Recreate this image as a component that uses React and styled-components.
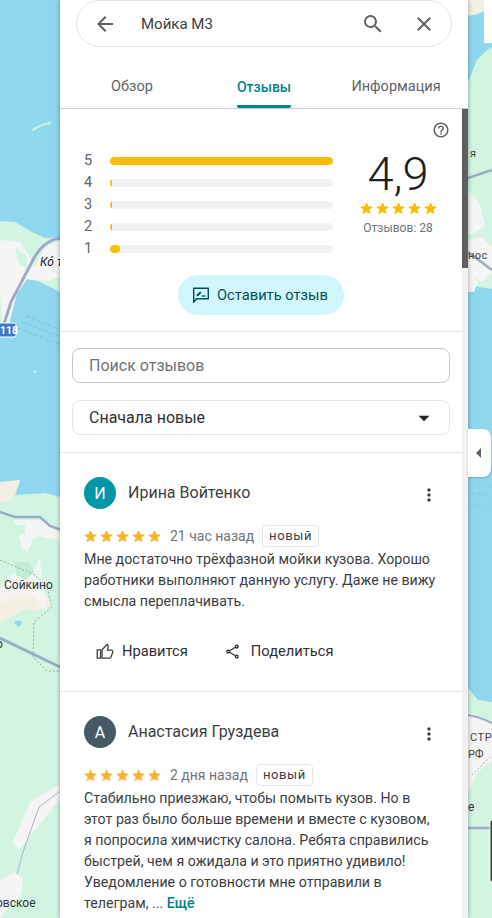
import React from 'react';
import styled, { createGlobalStyle } from 'styled-components';
import { MdArrowBack, MdSearch, MdClose, MdHelpOutline, MdMoreVert, MdOutlineShare, MdArrowDropDown } from 'react-icons/md';

const GlobalStyle = createGlobalStyle`
  html, body { margin: 0; padding: 0; background: #8ed7ec; }
  body { font-family: Roboto, "Noto Sans", sans-serif; -webkit-font-smoothing: antialiased; }
  * { box-sizing: border-box; }
`;

const Page = styled.div`
  position: relative;
  width: 492px;
  height: 918px;
  overflow: hidden;
  background: #8ed7ec;
`;

const MapLayer = styled.svg`
  position: absolute;
  inset: 0;
  width: 492px;
  height: 918px;
  font-family: Roboto, sans-serif;
`;

const Panel = styled.main`
  position: relative;
  width: 408px;
  height: 918px;
  margin-left: 60px;
  background: #fff;
  box-shadow: 0 0 5px rgba(0, 0, 0, 0.35);
  display: flex;
  flex-direction: column;
`;

const Header = styled.header`
  height: 109px;
  flex: none;
  border-bottom: 1px solid #cfcfcf;
  display: flex;
  flex-direction: column;
`;

const SearchBar = styled.div`
  height: 47px;
  margin: 0 16px;
  padding: 0 15px 0 16px;
  border: 1px solid #e2e2e2;
  border-radius: 24px;
  display: flex;
  align-items: center;
  color: #5f6368;
`;

const SearchText = styled.div`
  flex: 1;
  margin-left: 24px;
  font-size: 15px;
  color: #3c4043;
`;

const SearchIcon = styled.span`
  display: flex;
  margin-left: ${p => p.$gap || 0}px;
`;

const Tabs = styled.nav`
  flex: 1;
  display: grid;
  grid-template-columns: repeat(3, 132px);
  padding-left: 6px;
`;

const Tab = styled.div`
  justify-self: center;
  height: 61px;
  padding-top: 31px;
  font-size: ${p => (p.$active ? 14 : 14.5)}px;
  line-height: 18px;
  white-space: nowrap;
  font-weight: ${p => (p.$active ? 500 : 400)};
  color: ${p => (p.$active ? '#00838f' : '#5f6368')};
  border-bottom: 3px solid ${p => (p.$active ? '#00838f' : 'transparent')};
  border-radius: 0 0 2px 2px;
`;

const Body = styled.div`
  flex: 1;
  min-height: 0;
  display: flex;
`;

const Content = styled.div`
  flex: 1;
  min-width: 0;
  overflow: hidden;
`;

const Track = styled.div`
  width: 6px;
  flex: none;
  background: #f1f1f1;
`;

const Thumb = styled.div`
  height: 159px;
  background: #5f5f5f;
`;

const Summary = styled.section`
  height: 223px;
  padding: 12px 12px 0 24px;
  border-bottom: 1px solid #e6e6e6;
  display: flex;
  flex-direction: column;
`;

const HelpRow = styled.div`
  height: 18px;
  display: flex;
  justify-content: flex-end;
  color: #5f6368;
`;

const Stats = styled.div`
  display: flex;
  margin-top: 11px;
`;

const Histogram = styled.div`
  width: 249px;
  flex: none;
  display: flex;
  flex-direction: column;
`;

const BarRow = styled.div`
  height: 22px;
  display: flex;
  align-items: center;
  font-size: 14.5px;
  color: #5f6368;
`;

const BarLabel = styled.span`
  width: 26px;
  margin-top: -1px;
`;

const BarTrack = styled.div`
  width: 223px;
  height: 8px;
  border-radius: 4px;
  background: #f1f1f1;
  overflow: hidden;
`;

const BarFill = styled.div`
  height: 100%;
  border-radius: 4px;
  background: #fbbc04;
`;

const Score = styled.div`
  width: 105px;
  margin: -3px 0 0 13px;
  display: flex;
  flex-direction: column;
  align-items: center;
`;

const ScoreValue = styled.div`
  font-size: 47px;
  font-weight: 300;
  line-height: 54px;
  margin-bottom: 1px;
  color: #202124;
`;

const Stars = styled.div`
  display: flex;
  gap: 3px;
`;

const ReviewCount = styled.div`
  margin-top: 5px;
  font-size: 12px;
  line-height: 16px;
  color: #70757a;
`;

const WriteButton = styled.button`
  align-self: center;
  margin: 15px 0 0 -12px;
  width: 166px;
  height: 40px;
  padding: 0 0 0 14px;
  border: 0;
  border-radius: 20px;
  background: #d2f6fd;
  color: #00525c;
  font: 400 14.7px Roboto, sans-serif;
  display: flex;
  align-items: center;
  gap: 7px;
`;

const Filters = styled.section`
  height: 121px;
  padding: 16px 12px 0;
  border-bottom: 1px solid #e6e6e6;
  display: flex;
  flex-direction: column;
  gap: 17px;
`;

const FilterBox = styled.div`
  height: 35px;
  padding: 0 16px;
  border: 1px solid ${p => (p.$strong ? '#c4c7c5' : '#e6e6e6')};
  border-radius: 8px;
  display: flex;
  align-items: center;
  justify-content: space-between;
  font-size: 16px;
  color: ${p => (p.$strong ? '#70757a' : '#303134')};
`;

const Caret = styled.span`
  display: flex;
  margin-right: -4px;
  color: #202124;
`;

const Review = styled.article`
  padding: 24px 24px 0;
  height: ${p => p.$height}px;
  border-bottom: 1px solid #e6e6e6;
`;

const Author = styled.div`
  display: flex;
  align-items: center;
  height: 32px;
`;

const Avatar = styled.div`
  width: 32px;
  height: 32px;
  flex: none;
  border-radius: 50%;
  background: ${p => p.$color};
  color: #fff;
  font-size: 16px;
  display: flex;
  align-items: center;
  justify-content: center;
`;

const AuthorName = styled.div`
  flex: 1;
  margin: -2px 0 0 12px;
  font-size: 16px;
  color: #3c4043;
`;

const MoreButton = styled.span`
  display: flex;
  margin: 4px -1px 0 0;
  color: #3c4043;
`;

const Meta = styled.div`
  display: flex;
  align-items: center;
  height: 22px;
  margin-top: 16px;
`;

const TimeAgo = styled.span`
  margin-left: 9px;
  font-size: 14px;
  color: #70757a;
`;

const NewBadge = styled.span`
  height: 22px;
  margin-left: 8px;
  padding: 0 6px;
  border: 1px solid #e6e6e6;
  border-radius: 4px;
  font-size: 13px;
  line-height: 20px;
  letter-spacing: 0.6px;
  color: #3c4043;
`;

const ReviewText = styled.p`
  margin: 2px 0 0;
  max-width: 353px;
  font-size: 14.2px;
  line-height: 21px;
  color: #3c4043;
`;

const MoreLink = styled.span`
  font-weight: 500;
  color: #00838f;
`;

const Actions = styled.div`
  display: flex;
  margin-top: 27px;
  padding-left: 12px;
  gap: 36px;
`;

const Action = styled.div`
  display: flex;
  align-items: center;
  gap: ${p => p.$gap}px;
  height: 24px;
  font-size: 14.7px;
  color: #303134;
`;

const CollapseTab = styled.div`
  position: absolute;
  left: 468px;
  top: 429px;
  width: 23px;
  height: 48px;
  background: #fff;
  border-radius: 0 8px 8px 0;
  box-shadow: 0 1px 2px rgba(60, 64, 67, 0.3);
  display: flex;
  align-items: center;
  justify-content: center;
`;

const CollapseArrow = styled.span`
  width: 0;
  height: 0;
  margin-right: 2px;
  border-style: solid;
  border-width: 5px 5px 5px 0;
  border-color: transparent #5f6368 transparent transparent;
`;

function Star({ color, size }) {
  return (
    <svg width={size} height={size} viewBox="2 2 20 20" fill={color}>
      <path d="M12 17.27 18.18 21l-1.64-7.03L22 9.24l-7.19-.61L12 2 9.19 8.63 2 9.24l5.46 4.73L5.82 21z" />
    </svg>
  );
}

function FiveStars({ color = '#fbbc04' }) {
  return (
    <Stars>
      {[0, 1, 2, 3, 4].map(i => <Star key={i} color={color} size={13} />)}
    </Stars>
  );
}

function ThumbIcon() {
  return (
    <svg width="18" height="18" viewBox="0 0 18 18" fill="none" stroke="#3c4043" strokeWidth="1.3" strokeLinejoin="round">
      <path d="M1.2 7.8h3.4v8.4H1.2z" />
      <path d="M6 16.2h7.6c.6 0 1.1-.4 1.3-.9l1.9-5.2c.3-.9-.4-1.9-1.3-1.9h-4l.7-3.4c.2-1-.1-2-.9-2.6L6 7.8z" />
    </svg>
  );
}

function WriteIcon() {
  return (
    <svg width="18" height="18" viewBox="0 0 18 18" fill="none">
      <path d="M1.7 16.3V2.2h14.6v10.6H4.4z" stroke="#00525c" strokeWidth="1.4" strokeLinejoin="round" />
      <path d="M4.6 10.2v-1.4l3.5-3.4 1.4 1.4-3.5 3.4z" fill="#00525c" />
      <path d="M9.5 10h4" stroke="#00525c" strokeWidth="1.3" />
    </svg>
  );
}

// Map background: only the strips left and right of the panel are visible
function MapBackground() {
  const road = '#9dabc9';
  return (
    <MapLayer viewBox="0 0 492 918">
      <rect width="492" height="918" fill="#8ed7ec" />
      <path d="M31 130q8-6 19-8l1 2q-10 1-18 7z" fill="#d2f5e2" />

      {/* left peninsula */}
      <path d="M0 221l15 1 15 9 15 7 22-1v60l-12-8-18-8-16-3-8 8-5 19-8 25H0z" fill="#d2f5e2" />
      <path d="M0 240l20 2 10 15 5 10 10-20 22-9v55l-20-12-20-2-10 15-8 30-6 8-3-40z" fill="#f5f5f5" />
      <path d="M15 248l12 8 0 12-8-4zM47 281l13-4 7 7-10 7z" fill="#d2f5e2" />
      <path d="M62 238q-17 1-28 20L11 302 2 330" fill="none" stroke={road} strokeWidth="3" />
      <path d="M17 328l45 17M22 322l40 15M26 316l36 14" stroke="#7cc4dc" strokeWidth="1" strokeDasharray="4 2" fill="none" />
      <path d="M33 372l3-2 1 3z" fill="#d2f5e2" />
      <text x="40" y="266" fontSize="12" fontStyle="italic" fill="#222">Ко́ т</text>

      {/* left lower land */}
      <path d="M0 484l20-3-5 14 30-2 22 6V918H0z" fill="#d2f5e2" />
      <path d="M0 482l20-2-5 15-6 5-9 2z" fill="#f3efe2" />
      <path d="M14 520l30 0 10 10 10 3-4 8-22-5-5 3-5 13-6-4z" fill="#f5f5f5" />
      <path d="M14 525h11v9l-9 3z" fill="#d2f5e2" />
      <path d="M0 512l15 5h25l10 9 17 6" fill="none" stroke={road} strokeWidth="2.4" />
      <path d="M0 590l15-12 15-5 6 18 11 5 3 9-12 6-12-2-26 14z" fill="#f3efe2" />
      <path d="M0 585l14-12 20-3 6-12 3 25 5 28-8-5-6-10-20 0-14 8z" fill="#f5f5f5" opacity="0.75" />
      <path d="M15 562h14l5 10-8 8-10-5z" fill="#c0ecd2" />
      <path d="M14 622l6-2 2 4-4 3z" fill="#8ed7ec" />
      <path d="M0 560l35 15 12 12 5 20-18 15-1 35 14 14h20" fill="none" stroke="#8b9a94" strokeWidth="0.8" strokeDasharray="2 2" />
      <path d="M0 638l62 30" fill="none" stroke={road} strokeWidth="3" />
      <path d="M67 780L30 802 13 842l6 8 48-60z" fill="#f5f5f5" />
      <path d="M62 790l-23 17-16 45-8 30-5 12-10 8" fill="none" stroke={road} strokeWidth="0.9" />
      <path d="M0 880l14-8 9 6-1 15-10 12-12 13z" fill="#f5f5f5" />
      <text x="-4" y="648" fontSize="12" fill="#333">о</text>
      <text x="4" y="589" fontSize="12" fill="#333">Сойкино</text>
      <text x="-4" y="907" fontSize="12" fill="#333">овское</text>
      <g>
        <rect x="-6" y="323" width="22" height="14" rx="2" fill="#3e78c8" stroke="#fff" />
        <text x="0" y="334" fontSize="10.5" fontWeight="700" fill="#fff">118</text>
      </g>

      {/* right side, top */}
      <path d="M468 0h24v8l-14 6-10 2z" fill="#f3efe2" />
      <rect x="484" y="0" width="8" height="43" fill="#fff" />
      <path d="M468 82l9-22 10-10 5-3v242l-24-4z" fill="#d2f5e2" />
      <path d="M468 190l12 14 5 22-12 8-5 0zM468 240l14-3 10 10v25l-10 10-14-8zM468 272l10 10-4 10-6 0z" fill="#f5f5f5" />
      <path d="M468 178l24-8" stroke={road} strokeWidth="2.5" />
      <path d="M468 252l24 18" stroke={road} strokeWidth="2.5" />
      <text x="470" y="157" fontSize="11" fill="#444">я</text>
      <text x="468" y="259" fontSize="11" fill="#444" letterSpacing="0.5">нос</text>

      {/* right side, bottom */}
      <path d="M468 480l24 8M468 492l24 5M468 505l24 3" stroke="#7cc4dc" strokeWidth="0.7" strokeDasharray="3 2" />
      <path d="M468 688l10 12 14 2v216h-24z" fill="#d2f5e2" />
      <path d="M468 712l24 10v38l-14 12-10 20z" fill="#f5f5f5" />
      <path d="M468 715q12 2 24 8" fill="none" stroke={road} strokeWidth="2" />
      <path d="M472 775l20-20" stroke="#8b9a94" strokeWidth="0.8" strokeDasharray="2 2" />
      <path d="M468 828h24" stroke={road} strokeWidth="2.5" />
      <text x="470" y="741" fontSize="11" fill="#444" letterSpacing="0.6">СТРЕ</text>
      <text x="468" y="758" fontSize="11" fill="#444">РФ</text>
      <text x="468" y="811" fontSize="12" fill="#333">е</text>
      <rect x="490" y="820" width="4" height="62" rx="2" fill="#2c3a2c" stroke="#fff" />
    </MapLayer>
  );
}

const ratingBars = [
  { label: 5, width: 223 },
  { label: 4, width: 2 },
  { label: 3, width: 2 },
  { label: 2, width: 2 },
  { label: 1, width: 10 },
];

const reviews = [
  {
    name: 'Ирина Войтенко',
    initial: 'И',
    color: '#0097a7',
    time: '21 час назад',
    height: 239,
    text: 'Мне достаточно трёхфазной мойки кузова. Хорошо работники выполняют данную услугу. Даже не вижу смысла переплачивать.',
    actions: true,
  },
  {
    name: 'Анастасия Груздева',
    initial: 'А',
    color: '#455a64',
    time: '2 дня назад',
    height: 300,
    text: 'Стабильно приезжаю, чтобы помыть кузов. Но в этот раз было больше времени и вместе с кузовом, я попросила химчистку салона. Ребята справились быстрей, чем я ожидала и это приятно удивило! Уведомление о готовности мне отправили в телеграм, ... ',
    more: true,
  },
];

function ReviewCard({ review }) {
  return (
    <Review $height={review.height}>
      <Author>
        <Avatar $color={review.color}>{review.initial}</Avatar>
        <AuthorName>{review.name}</AuthorName>
        <MoreButton><MdMoreVert size={20} /></MoreButton>
      </Author>
      <Meta>
        <FiveStars color="#fbb429" />
        <TimeAgo>{review.time}</TimeAgo>
        <NewBadge>новый</NewBadge>
      </Meta>
      <ReviewText>
        {review.text}
        {review.more && <MoreLink>Ещё</MoreLink>}
      </ReviewText>
      {review.actions && (
        <Actions>
          <Action $gap={8}><ThumbIcon />Нравится</Action>
          <Action $gap={10}><MdOutlineShare size={17} />Поделиться</Action>
        </Actions>
      )}
    </Review>
  );
}

export default function App() {
  return (
    <Page>
      <GlobalStyle />
      <MapBackground />
      <Panel>
        <Header>
          <SearchBar>
            <MdArrowBack size={24} />
            <SearchText>Мойка М3</SearchText>
            <SearchIcon><MdSearch size={24} /></SearchIcon>
            <SearchIcon $gap={27}><MdClose size={24} /></SearchIcon>
          </SearchBar>
          <Tabs>
            <Tab>Обзор</Tab>
            <Tab $active>Отзывы</Tab>
            <Tab>Информация</Tab>
          </Tabs>
        </Header>
        <Body>
          <Content>
            <Summary>
              <HelpRow><MdHelpOutline size={18} /></HelpRow>
              <Stats>
                <Histogram>
                  {ratingBars.map(bar => (
                    <BarRow key={bar.label}>
                      <BarLabel>{bar.label}</BarLabel>
                      <BarTrack><BarFill style={{ width: bar.width }} /></BarTrack>
                    </BarRow>
                  ))}
                </Histogram>
                <Score>
                  <ScoreValue>4,9</ScoreValue>
                  <FiveStars />
                  <ReviewCount>Отзывов: 28</ReviewCount>
                </Score>
              </Stats>
              <WriteButton><WriteIcon />Оставить отзыв</WriteButton>
            </Summary>
            <Filters>
              <FilterBox $strong>Поиск отзывов</FilterBox>
              <FilterBox>
                Сначала новые
                <Caret><MdArrowDropDown size={26} /></Caret>
              </FilterBox>
            </Filters>
            {reviews.map(review => <ReviewCard key={review.name} review={review} />)}
          </Content>
          <Track><Thumb /></Track>
        </Body>
      </Panel>
      <CollapseTab><CollapseArrow /></CollapseTab>
    </Page>
  );
}
